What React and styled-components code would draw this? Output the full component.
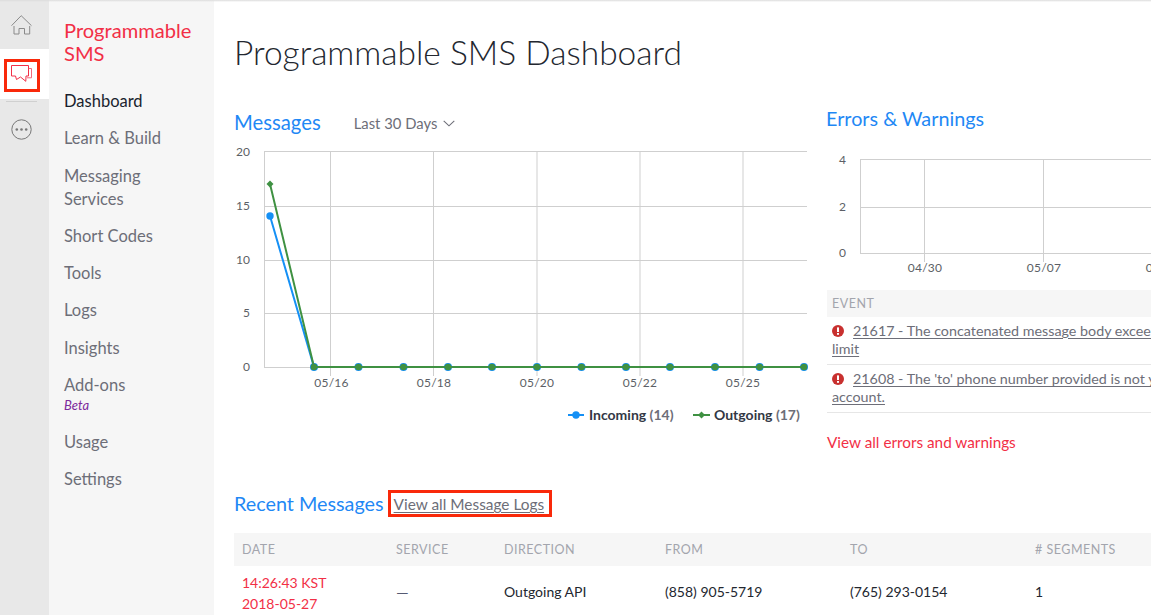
import React from 'react';
import styled, { createGlobalStyle } from 'styled-components';

const Global = createGlobalStyle`
  html, body { margin: 0; padding: 0; background: #fff; }
  body { width: 1151px; height: 615px; overflow: hidden; font-family: Lato, "Open Sans", sans-serif; color: #565b73; }
  * { box-sizing: border-box; }
`;

const Page = styled.div`
  display: flex; width: 1151px; height: 615px; overflow: hidden; position: relative; background: #fff;
`;
const TopShade = styled.div`
  position: absolute; left: 0; right: 0; top: 0; height: 2px; background: linear-gradient(#dcdcdc, rgba(220,220,220,0));
`;
const Rail = styled.nav`
  width: 49px; flex: none; background: #e8e8e8; display: flex; flex-direction: column;
`;
const RailItem = styled.div`
  height: ${p => (p.$active ? '50px' : '49px')}; padding-right: 8px; display: flex; align-items: center; justify-content: center;
  background: ${p => (p.$active ? '#fff' : 'transparent')}; position: relative;
`;
const RailDivider = styled.div`
  height: 1px; margin: 2px 12px 0 6px; background: #d0d0d0; flex: none;
`;
const RailMore = styled.div`
  display: flex; justify-content: center; padding: 17px 7px 0 0;
`;
const Highlight = styled.div`
  position: absolute; border: 3px solid #f9290a; pointer-events: none;
`;
const ChatHighlight = styled(Highlight)`
  left: 4px; top: 10px; width: 36px; height: 33px;
`;
const Side = styled.aside`
  width: 165px; flex: none; background: #f6f6f6; padding: 19px 0 0 15px;
`;
const SideTitle = styled.div`
  font-size: 20.1px; line-height: 23px; color: #f22f46; margin-bottom: 25px; width: 140px;
`;
const NavList = styled.div`
  display: flex; flex-direction: column;
`;
const NavItem = styled.div`
  font-size: 16.5px; line-height: 23px; color: ${p => (p.$current ? '#1a1f2e' : '#6d6e78')};
  margin-bottom: 14.25px;
`;
const Beta = styled.div`
  font-size: 13px; line-height: 13px; font-style: italic; color: #7d2a9c; margin-top: 2px; margin-bottom: 5px;
`;
const Main = styled.main`
  flex: 1; min-width: 0; padding: 0 0 0 20px; position: relative;
`;
const Title = styled.h1`
  margin: 0; font-weight: 300; font-size: 33.5px; line-height: 40px; padding-top: 32px; color: #23272f; height: 73px;
`;
const Columns = styled.div`
  display: flex; margin-top: 36px; gap: 21px;
`;
const Left = styled.section`
  width: 572px; flex: none;
`;
const Right = styled.section`
  width: 508px; flex: none; margin-top: -4px;
`;
const SectionHead = styled.div`
  display: flex; align-items: center; height: 26px;
`;
const SectionTitle = styled.h2`
  margin: 0 0 ${p => p.$lift || 0}px ${p => p.$inset || 0}px; font-size: ${p => p.$size}px; line-height: 26px; font-weight: 400; color: #1f88f5;
`;
const Range = styled.div`
  display: flex; align-items: center; gap: 6px; margin-left: 33px; padding-top: 2px; font-size: 14.8px; color: #6d6e78;
`;
const ChartSvg = styled.svg`
  display: block; overflow: visible;
`;
const MessagesChart = styled(ChartSvg)`
  margin: 8px 0 0 1px;
`;
const ErrorsChart = styled(ChartSvg)`
  margin-top: 28px;
`;
const EventHead = styled.div`
  margin-top: 11px; height: 27px; background: #f6f6f6; padding-left: 5px; display: flex; align-items: center;
  font-size: 12.5px; letter-spacing: 0.5px; color: #a3a5ad;
`;
const EventRow = styled.div`
  border-bottom: 1px solid #e6e6e6; padding: 5px 5px 6px; font-size: 14.3px; line-height: 18px; color: #6d6e78; white-space: nowrap;
`;
const EventLink = styled.span`
  text-decoration: underline; text-underline-offset: 2px;
`;
const ErrIcon = styled.svg`
  display: inline-block; vertical-align: -1px; margin-right: 9px;
`;
const RedLink = styled.div`
  margin-top: 19px; font-size: 15.3px; line-height: 20px; color: #f22f46;
`;
const RecentHead = styled.div`
  display: flex; align-items: center; margin-top: 39px; height: 26px; position: relative;
`;
const LogLink = styled.span`
  margin-left: 10px; font-size: 15.4px; color: #6d6e78; text-decoration: underline; text-underline-offset: 2px;
`;
const LogHighlight = styled(Highlight)`
  left: 154px; top: -1px; width: 164px; height: 27px;
`;
const Table = styled.div`
  margin-top: 16px; font-size: 14px;
`;
const TableRow = styled.div`
  display: grid; grid-template-columns: 154px 108px 161px 185px 185px 1fr; padding-left: 8px; align-items: center;
`;
const HeadRow = styled(TableRow)`
  height: 33px; background: #f6f6f6; font-size: 12.5px; letter-spacing: 0.5px; color: #a3a5ad;
`;
const BodyRow = styled(TableRow)`
  height: 50px; color: #23272f;
`;
const DateCell = styled.div`
  color: #f22f46; line-height: 21px; padding-top: 4px;
`;
const Dash = styled.div`
  color: #565b73; font-size: 16px;
`;

const ms = { fontFamily: 'Lato, sans-serif', fontSize: 12, fill: '#5c5f66' };
const legend = { fontFamily: 'Lato, sans-serif', fontSize: 14, fontWeight: 700, fill: '#333845' };
const dots = [314, 358.5, 403.5, 448, 492, 537, 581.5, 626, 670, 715, 759.6, 804];

const HomeIcon = () => (
  <svg width="24" height="24" viewBox="0 0 24 24" fill="none" stroke="#8a8a8a" strokeWidth="1">
    <path d="M2.5 12.7 L12.2 2.7 L22.5 12.7" />
    <path d="M5 13 V21 H10 V15.5 H15.5 V21 H20.7 V13" />
  </svg>
);
const ChatIcon = () => (
  <svg width="24" height="24" viewBox="0 0 24 24" fill="none" strokeWidth="1">
    <path d="M2.5 3.5 H19.5 V14 H17 L16.8 19.3 L11.5 15 L7.5 17.5 L6.5 14 H2.5 Z" stroke="#f22f46" />
    <path d="M19.8 6.5 H22.5 V15.8 H18" stroke="#f4687a" />
  </svg>
);
const MoreIcon = () => (
  <svg width="21" height="21" viewBox="0 0 21 21" fill="none">
    <circle cx="10.5" cy="10.5" r="9.7" stroke="#777" />
    <circle cx="5.8" cy="10.5" r="1.3" fill="#777" />
    <circle cx="10.5" cy="10.5" r="1.3" fill="#777" />
    <circle cx="15.2" cy="10.5" r="1.3" fill="#777" />
  </svg>
);
const ErrorGlyph = () => (
  <ErrIcon width="12" height="12" viewBox="0 0 12 12">
    <circle cx="6" cy="6" r="6" fill="#c8302f" />
    <rect x="5" y="2.4" width="2" height="4.6" fill="#fff" />
    <rect x="5" y="8" width="2" height="1.8" fill="#fff" />
  </ErrIcon>
);

const Messages = () => (
  <MessagesChart width="572" height="282" viewBox="235 143 572 282">
    <g stroke="#cfcfcf" strokeWidth="1" fill="none">
      {[151.5, 206.5, 260.5, 313.5, 367.5].map(y => <path key={y} d={`M265 ${y} H807`} />)}
      <path d="M264.5 151 V368" />
      {[330.5, 433.5, 537, 640, 743].map(x => <path key={x} d={`M${x} 151 V376`} />)}
    </g>
    {[[20, 156], [15, 210], [10, 264], [5, 317], [0, 371]].map(([t, y]) => (
      <text key={t} x="250" y={y} textAnchor="end" style={ms}>{t}</text>
    ))}
    {[['05/16', 331.5], ['05/18', 434], ['05/20', 537], ['05/22', 640], ['05/25', 743]].map(([t, x]) => (
      <text key={t} x={x} y="386.5" textAnchor="middle" style={ms} letterSpacing="0.2">{t}</text>
    ))}
    <path d="M270 216 L314 367 H804" stroke="#1590f5" strokeWidth="2" fill="none" />
    <circle cx="270" cy="216" r="3.7" fill="#1590f5" />
    {dots.map(x => <circle key={x} cx={x} cy="367" r="4" fill="#1590f5" />)}
    <path d="M270 184 L314 367 H804" stroke="#3f9142" strokeWidth="2" fill="none" />
    <path d="M270 180.5 L273.5 184 L270 187.5 L266.5 184 Z" fill="#3f9142" />
    {dots.map(x => <circle key={`g${x}`} cx={x} cy="367" r="3.3" fill="#3f9142" />)}
    <path d="M568 415 H584" stroke="#1590f5" strokeWidth="2" />
    <circle cx="576" cy="415" r="3.7" fill="#1590f5" />
    <path d="M693 415 H710" stroke="#3f9142" strokeWidth="2" />
    <path d="M701.5 411.5 L705 415 L701.5 418.5 L698 415 Z" fill="#3f9142" />
    <text x="589" y="419.5" style={legend}>Incoming <tspan fill="#6d6e78">(14)</tspan></text>
    <text x="714" y="419.5" style={legend}>Outgoing <tspan fill="#6d6e78">(17)</tspan></text>
  </MessagesChart>
);

const Errors = () => (
  <ErrorsChart width="324" height="120" viewBox="827 159 324 120">
    <g stroke="#cfcfcf" fill="none">
      <path d="M860 159.5 H1151" />
      <path d="M860 207.5 H1151" />
      <path d="M860 253.5 H1151" />
      <path d="M860.5 159 V254" />
      <path d="M924.5 159 V262" />
      <path d="M1043.5 159 V262" />
    </g>
    {[[4, 164], [2, 211], [0, 257]].map(([t, y]) => (
      <text key={t} x="846" y={y} textAnchor="end" style={ms}>{t}</text>
    ))}
    <text x="925" y="272" textAnchor="middle" style={ms} letterSpacing="0.2">04/30</text>
    <text x="1044" y="272" textAnchor="middle" style={ms} letterSpacing="0.2">05/07</text>
    <text x="1163" y="272" textAnchor="middle" style={ms} letterSpacing="0.2">05/14</text>
  </ErrorsChart>
);

export default function App() {
  return (
    <Page>
      <Global />
      <Rail>
        <RailItem><HomeIcon /></RailItem>
        <RailItem $active><ChatIcon /><ChatHighlight /></RailItem>
        <RailDivider />
        <RailMore><MoreIcon /></RailMore>
      </Rail>
      <Side>
        <SideTitle>Programmable SMS</SideTitle>
        <NavList>
          <NavItem $current>Dashboard</NavItem>
          <NavItem>Learn &amp; Build</NavItem>
          <NavItem>Messaging<br />Services</NavItem>
          <NavItem>Short Codes</NavItem>
          <NavItem>Tools</NavItem>
          <NavItem>Logs</NavItem>
          <NavItem>Insights</NavItem>
          <NavItem>Add-ons<Beta>Beta</Beta></NavItem>
          <NavItem>Usage</NavItem>
          <NavItem>Settings</NavItem>
        </NavList>
      </Side>
      <Main>
        <Title>Programmable SMS Dashboard</Title>
        <Columns>
          <Left>
            <SectionHead>
              <SectionTitle $size={20.3}>Messages</SectionTitle>
              <Range>
                Last 30 Days
                <svg width="12" height="7" viewBox="0 0 12 7" fill="none" stroke="#6d6e78" strokeWidth="1.1"><path d="M0.7 0.8 L6 5.8 L11.3 0.8" /></svg>
              </Range>
            </SectionHead>
            <Messages />
          </Left>
          <Right>
            <SectionHead><SectionTitle $size={19.8} $inset={-1}>Errors &amp; Warnings</SectionTitle></SectionHead>
            <Errors />
            <EventHead>EVENT</EventHead>
            <EventRow><ErrorGlyph /><EventLink>21617 - The concatenated message body exceeds the 1600 character<br />limit</EventLink></EventRow>
            <EventRow><ErrorGlyph /><EventLink>21608 - The 'to' phone number provided is not yet verified for this<br />account.</EventLink></EventRow>
            <RedLink>View all errors and warnings</RedLink>
          </Right>
        </Columns>
        <RecentHead>
          <SectionTitle $size={19.8} $lift={2}>Recent Messages</SectionTitle>
          <LogLink>View all Message Logs</LogLink>
          <LogHighlight />
        </RecentHead>
        <Table>
          <HeadRow>
            <div>DATE</div><div>SERVICE</div><div>DIRECTION</div><div>FROM</div><div>TO</div><div># SEGMENTS</div>
          </HeadRow>
          <BodyRow>
            <DateCell>14:26:43 KST<br />2018-05-27</DateCell>
            <Dash>—</Dash>
            <div>Outgoing API</div>
            <div>(858) 905-5719</div>
            <div>(765) 293-0154</div>
            <div>1</div>
          </BodyRow>
        </Table>
      </Main>
      <TopShade />
    </Page>
  );
}
